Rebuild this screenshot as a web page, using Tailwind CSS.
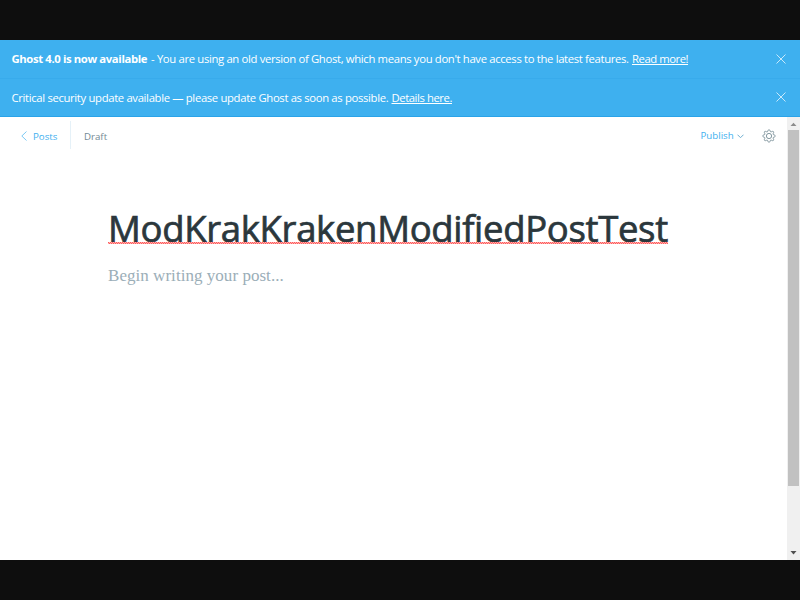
<!DOCTYPE html>
<html lang="en">
<head>
<meta charset="utf-8">
<title>Ghost editor</title>
<script src="https://cdn.jsdelivr.net/npm/@tailwindcss/browser@4"></script>
</head>
<body class="h-[600px] w-[800px] overflow-hidden bg-[#0e0e0e] py-10 font-['Noto_Sans','Open_Sans',sans-serif]">
<div class="flex h-[520px] flex-col bg-white">
  <aside class="shrink-0 bg-[#3eb0ef] font-['Open_Sans','Noto_Sans',sans-serif] text-[11.3px] leading-[18px] text-white">
    <div class="flex h-[38.5px] items-center justify-between border-b border-[#38abec] pr-[14.500px] pl-[11.5px]">
      <p class="pt-px whitespace-nowrap"><b class="inline-block w-[136px] font-bold tracking-[-0.37px]">Ghost 4.0 is now available</b><span class="inline-block w-[484.5px] pl-[3.500px] tracking-[-0.34px]">- You are using an old version of Ghost, which means you don't have access to the latest features.</span><a class="tracking-[-0.46px] underline">Read more!</a></p>
      <svg class="h-[10px] w-[10px]" viewBox="0 0 10 10" fill="none" stroke="#d8effc" stroke-width=".9"><path d="M.5.5l9 9M9.500.5l-9 9"/></svg>
    </div>
    <div class="flex h-[38.500px] items-center justify-between border-b border-[#2aa3e8] pr-[14.500px] pl-[11.5px]">
      <p class="pt-px whitespace-nowrap"><span class="inline-block w-[380px] tracking-[-0.34px]">Critical security update available — please update Ghost as soon as possible.</span><a class="tracking-[-0.43px] underline">Details here.</a></p>
      <svg class="h-[10px] w-[10px]" viewBox="0 0 10 10" fill="none" stroke="#d8effc" stroke-width=".9"><path d="M.5.5l9 9M9.500.5l-9 9"/></svg>
    </div>
  </aside>
  <div class="flex min-h-0 flex-1">
    <main class="flex-1">
      <header class="flex h-[38px] items-center pr-[11.500px] pl-[20.500px] font-['Open_Sans','Noto_Sans',sans-serif] text-[9.700px]">
        <svg class="mr-[6.500px] h-[10px] w-[6px]" viewBox="0 0 6 10" fill="none" stroke="#7ccaf4"><path d="M5.500.5L.8 5l4.700 4.500"/></svg>
        <a class="w-[37px] pt-[2px] text-[#3eb0ef]">Posts</a>
        <div class="mb-[2px] h-[28px] w-px bg-[#e5f1f8]"></div>
        <span class="ml-[13px] pt-[2px] text-[#738a94]">Draft</span>
        <div class="ml-auto flex items-center text-[#3eb0ef]">
          <span class="w-[36px]">Publish</span>
          <svg class="mt-px h-[5px] w-[7px]" viewBox="0 0 7 5" fill="none" stroke="#6faed0"><path d="M.5.7l3 3 3-3"/></svg>
        </div>
        <svg class="ml-[18px] h-[14px] w-[14px]" viewBox="0 0 24 24" fill="none" stroke="#738a94" stroke-width="1.500"><circle cx="12" cy="12" r="4.500"/><path d="M13.500 2.300a1.600 1.600 0 0 0-3 0l-.5 1.400a1.800 1.800 0 0 1-2.500 1l-1.300-.6a1.600 1.600 0 0 0-2.100 2.100l.6 1.300a1.800 1.800 0 0 1-1 2.500l-1.400.5a1.600 1.600 0 0 0 0 3l1.400.5a1.800 1.800 0 0 1 1 2.500l-.6 1.300a1.600 1.600 0 0 0 2.100 2.100l1.300-.6a1.800 1.800 0 0 1 2.500 1l.5 1.400a1.600 1.600 0 0 0 3 0l.5-1.400a1.800 1.800 0 0 1 2.500-1l1.300.6a1.600 1.600 0 0 0 2.100-2.100l-.6-1.300a1.800 1.800 0 0 1 1-2.500l1.400-.5a1.600 1.600 0 0 0 0-3l-1.400-.5a1.800 1.800 0 0 1-1-2.500l.6-1.300a1.600 1.600 0 0 0-2.100-2.100l-1.300.6a1.800 1.800 0 0 1-2.500-1z"/></svg>
      </header>
      <article class="px-[108px] pt-[47px]">
        <h1 class="relative h-[52px] w-[560px] font-['Open_Sans','Noto_Sans',sans-serif] text-[36.500px] leading-[52px] font-medium tracking-[-0.33px] whitespace-nowrap text-[#2b373c] [-webkit-text-stroke:0.7px_#2b373c]">ModKrakKrakenModifiedPostTest
          <svg class="absolute top-[40px] left-0 h-[2px] w-[560px]" shape-rendering="crispEdges"><defs><pattern id="spell" width="2" height="2" patternUnits="userSpaceOnUse"><path fill="#ff5a5a" d="M0 0h1v1H0zM1 1h1v1H1z"/><path fill="#ffb0b0" d="M1 0h1v1H1zM0 1h1v1H0z"/></pattern></defs><rect width="560" height="2" fill="url(#spell)"/></svg>
        </h1>
        <p class="mt-[9px] font-['Liberation_Serif',serif] text-[17px] leading-[26px] tracking-[0.04px] whitespace-nowrap text-[#9baeb8]">Begin writing your post...</p>
      </article>
    </main>
    <div class="flex w-[13px] flex-col items-center bg-[#f0f0f0]">
      <svg class="h-[13px] w-[13px] shrink-0" viewBox="0 0 13 13"><path fill="#8b8b8b" d="M3.500 9l3-3.200 3 3.200z"/></svg>
      <div class="h-[356px] w-[11px] bg-[#c1c1c1]"></div>
      <svg class="mt-auto h-[13px] w-[13px] shrink-0" viewBox="0 0 13 13"><path fill="#505050" d="M3.500 4h6l-3 3.500z"/></svg>
    </div>
  </div>
</div>
</body>
</html>
